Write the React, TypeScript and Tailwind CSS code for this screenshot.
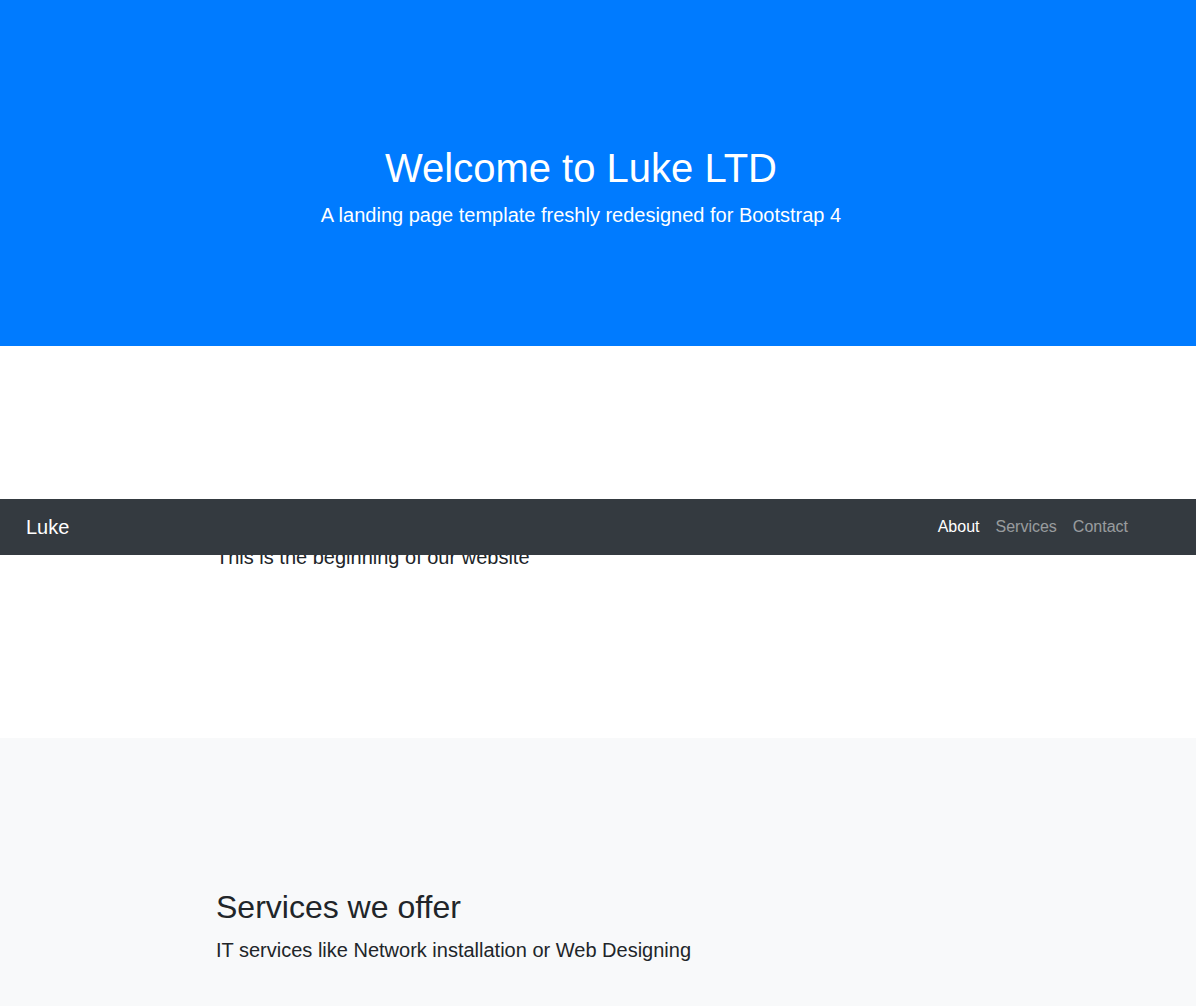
import React from 'react'

const font = { fontFamily: '"Liberation Sans", Arial, sans-serif' }

function Navbar() {
    return (
        <nav className="absolute left-0 right-0 top-[153px] h-14 bg-[#343a40]">
            <div className="w-[1162px] h-full px-[26px] flex items-center justify-between">
                <a className="text-xl text-white leading-[30px]">Luke</a>
                <ul className="flex items-center">
                    <li><a className="block px-2 py-2 text-base text-white">About</a></li>
                    <li><a className="block px-2 py-2 text-base text-white/50">Services</a></li>
                    <li><a className="block px-2 py-2 text-base text-white/50">Contact</a></li>
                </ul>
            </div>
        </nav>
    )
}

export default function App() {
    return (
        <div className="min-h-screen bg-white text-[#212529]" style={font}>
            {/* HERO */}
            <header className="h-[346px] bg-[#007bff] text-white pt-[144px]">
                <div className="w-[1162px] px-[216px] text-center">
                    <h1 className="text-[40px] leading-[48px] mb-2">Welcome to Luke LTD</h1>
                    <p className="text-xl leading-[30px]">A landing page template freshly redesigned for Bootstrap 4</p>
                </div>
            </header>

            {/* ABOUT */}
            <section className="relative pt-[150px] pb-[150px]">
                <div className="w-[1162px] px-[216px]">
                    <h2 className="text-[32px] leading-[38.4px] mb-2">About this page</h2>
                    <p className="text-xl leading-[30px] mb-4">This is the beginning of our website</p>
                </div>
                <Navbar />
            </section>

            {/* SERVICES */}
            <section className="bg-[#f8f9fa] pt-[150px] pb-[150px]">
                <div className="w-[1162px] px-[216px]">
                    <h2 className="text-[32px] leading-[38.4px] mb-2">Services we offer</h2>
                    <p className="text-xl leading-[30px] mb-4">IT services like Network installation or Web Designing</p>
                </div>
            </section>
        </div>
    )
}
